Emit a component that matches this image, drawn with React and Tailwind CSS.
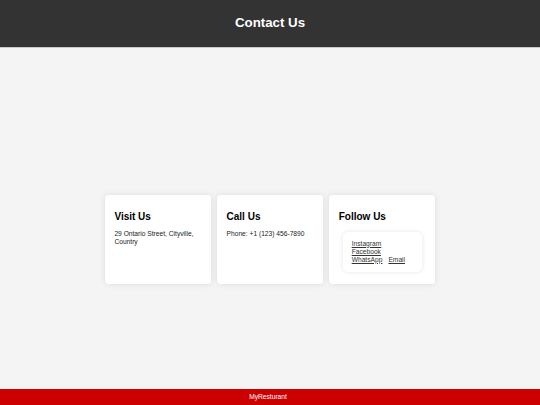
export default function App() {
  const font = { fontFamily: '"Liberation Sans", Arial, sans-serif' };
  return (
    <div style={font} className="flex flex-col h-[405px] w-full bg-[#f4f4f4] text-black">
      <header className="h-[48px] shrink-0 bg-[#333333] border-b border-[#cccccc] flex items-center justify-center">
        <h1 className="text-[13.3px] font-bold text-white leading-none mt-[-1px]">Contact Us</h1>
      </header>
      <main className="flex-1 flex justify-center pt-[147px]">
        <div className="flex gap-[6.67px] items-start">
          <div className="w-[105.5px] h-[89px] bg-white rounded-[4px] shadow-[0_0_6px_rgba(0,0,0,0.1)] px-[9.3px] pt-[16px]">
            <h2 className="text-[10px] font-bold leading-[11.5px]">Visit Us</h2>
            <p className="text-[6.67px] leading-[7.7px] mt-[7.5px] text-[#222]">29 Ontario Street, Cityville, Country</p>
          </div>
          <div className="w-[105.5px] h-[89px] bg-white rounded-[4px] shadow-[0_0_6px_rgba(0,0,0,0.1)] px-[9.3px] pt-[16px]">
            <h2 className="text-[10px] font-bold leading-[11.5px]">Call Us</h2>
            <p className="text-[6.67px] leading-[7.7px] mt-[7.5px] text-[#222]">Phone: +1 (123) 456-7890</p>
          </div>
          <div className="w-[105.5px] h-[89px] bg-white rounded-[4px] shadow-[0_0_6px_rgba(0,0,0,0.1)] px-[9.3px] pt-[16px]">
            <h2 className="text-[10px] font-bold leading-[11.5px]">Follow Us</h2>
            <div className="mt-[9px] ml-[4.3px] w-[79px] h-[40px] rounded-[5px] bg-white shadow-[0_0_5px_rgba(0,0,0,0.1)] pl-[8.7px] pt-[8.3px] text-[6.67px] leading-[8px] text-[#333]">
              <div><a className="underline">Instagram</a></div>
              <div><a className="underline">Facebook</a></div>
              <div className="flex gap-[6px]"><a className="underline">WhatsApp</a><a className="underline">Email</a></div>
            </div>
          </div>
        </div>
      </main>
      <footer className="h-[16px] shrink-0 bg-[#cc0000] flex items-center justify-center">
        <span className="text-[6.67px] text-white leading-none mr-[4px]">MyResturant</span>
      </footer>
    </div>
  );
}
